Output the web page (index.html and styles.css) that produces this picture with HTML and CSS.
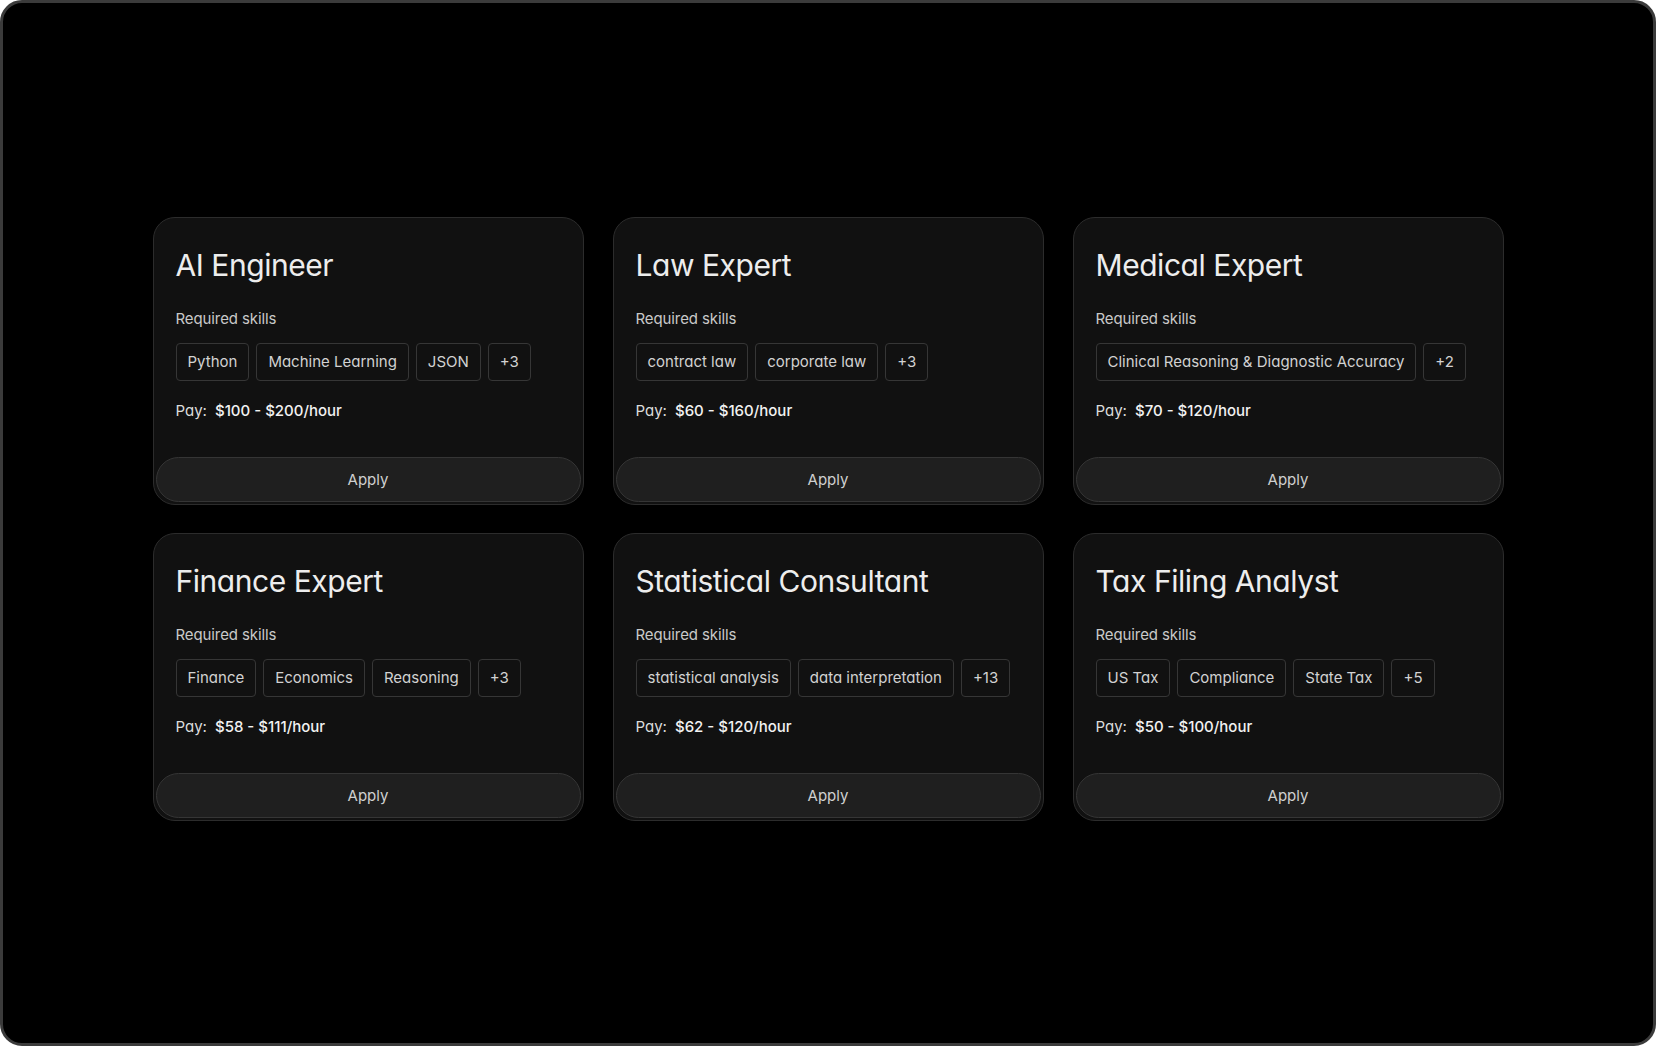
FILE: index.html
```html
<!DOCTYPE html>
<html lang="en">
<head>
<meta charset="utf-8">
<title>Jobs</title>
<link rel="stylesheet" href="styles.css">
</head>
<body>
<div class="frame">
  <div class="grid">
    <article class="card">
      <div class="card-body">
        <h2 class="title">AI Engineer</h2>
        <p class="label">Required skills</p>
        <div class="tags">
          <span class="tag">Python</span><span class="tag">Machine Learning</span><span class="tag">JSON</span><span class="tag">+3</span>
        </div>
        <p class="pay"><span class="pay-label">Pay:</span><span class="pay-value">$100 - $200/hour</span></p>
      </div>
      <button class="apply">Apply</button>
    </article>
    <article class="card">
      <div class="card-body">
        <h2 class="title">Law Expert</h2>
        <p class="label">Required skills</p>
        <div class="tags">
          <span class="tag">contract law</span><span class="tag">corporate law</span><span class="tag">+3</span>
        </div>
        <p class="pay"><span class="pay-label">Pay:</span><span class="pay-value">$60 - $160/hour</span></p>
      </div>
      <button class="apply">Apply</button>
    </article>
    <article class="card">
      <div class="card-body">
        <h2 class="title">Medical Expert</h2>
        <p class="label">Required skills</p>
        <div class="tags">
          <span class="tag">Clinical Reasoning &amp; Diagnostic Accuracy</span><span class="tag">+2</span>
        </div>
        <p class="pay"><span class="pay-label">Pay:</span><span class="pay-value">$70 - $120/hour</span></p>
      </div>
      <button class="apply">Apply</button>
    </article>
    <article class="card">
      <div class="card-body">
        <h2 class="title">Finance Expert</h2>
        <p class="label">Required skills</p>
        <div class="tags">
          <span class="tag">Finance</span><span class="tag">Economics</span><span class="tag">Reasoning</span><span class="tag">+3</span>
        </div>
        <p class="pay"><span class="pay-label">Pay:</span><span class="pay-value">$58 - $111/hour</span></p>
      </div>
      <button class="apply">Apply</button>
    </article>
    <article class="card">
      <div class="card-body">
        <h2 class="title">Statistical Consultant</h2>
        <p class="label">Required skills</p>
        <div class="tags">
          <span class="tag">statistical analysis</span><span class="tag">data interpretation</span><span class="tag">+13</span>
        </div>
        <p class="pay"><span class="pay-label">Pay:</span><span class="pay-value">$62 - $120/hour</span></p>
      </div>
      <button class="apply">Apply</button>
    </article>
    <article class="card">
      <div class="card-body">
        <h2 class="title">Tax Filing Analyst</h2>
        <p class="label">Required skills</p>
        <div class="tags">
          <span class="tag">US Tax</span><span class="tag">Compliance</span><span class="tag">State Tax</span><span class="tag">+5</span>
        </div>
        <p class="pay"><span class="pay-label">Pay:</span><span class="pay-value">$50 - $100/hour</span></p>
      </div>
      <button class="apply">Apply</button>
    </article>
  </div>
</div>
</body>
</html>
```
FILE: styles.css
```css
* { box-sizing: border-box; }
html, body {
  margin: 0;
  padding: 0;
  background: #ffffff;
}
body {
  font-family: "Inter", "Noto Sans", sans-serif;
  font-feature-settings: "cv11" 1;
  -webkit-font-smoothing: antialiased;
}
.frame {
  width: 1656px;
  height: 1046px;
  background: #000;
  border: 3px solid #3b3b3b;
  border-radius: 22px;
  display: flex;
  justify-content: center;
  align-items: flex-start;
  padding-top: 214px;
}
.grid {
  display: grid;
  grid-template-columns: repeat(3, 431px);
  grid-auto-rows: 288px;
  column-gap: 29px;
  row-gap: 28px;
}
.card {
  background: #111111;
  border: 1px solid #2c2c2c;
  border-radius: 22px;
  display: flex;
  flex-direction: column;
  padding: 0 2px 2px 2px;
}
.card-body {
  padding: 29px 20px 0 20px;
}
.title {
  margin: 0;
  font-size: 30px;
  line-height: 36px;
  font-weight: 400;
  color: #ededed;
  letter-spacing: -0.45px;
}
.label {
  margin: 26px 0 0 0;
  font-size: 15px;
  line-height: 20px;
  color: #c9c9c9;
  letter-spacing: -0.1px;
}
.tags {
  display: flex;
  gap: 7px;
  margin-top: 14px;
}
.tag {
  border: 1px solid #363636;
  border-radius: 4px;
  padding: 8px 11px;
  font-size: 15px;
  line-height: 20px;
  color: #d2d2d2;
  white-space: nowrap;
}
.pay {
  margin: 20px 0 0 0;
  font-size: 15px;
  line-height: 20px;
  display: flex;
  gap: 8px;
}
.pay-label {
  color: #dcdcdc;
}
.pay-value {
  color: #f2f2f2;
  font-weight: 500;
}
.apply {
  margin-top: auto;
  height: 45px;
  width: 100%;
  background: #1f1f1f;
  border: 1px solid #353535;
  border-radius: 23px;
  color: #cfcfcf;
  font-family: inherit;
  font-feature-settings: inherit;
  font-size: 15px;
  padding: 0;
}
```
